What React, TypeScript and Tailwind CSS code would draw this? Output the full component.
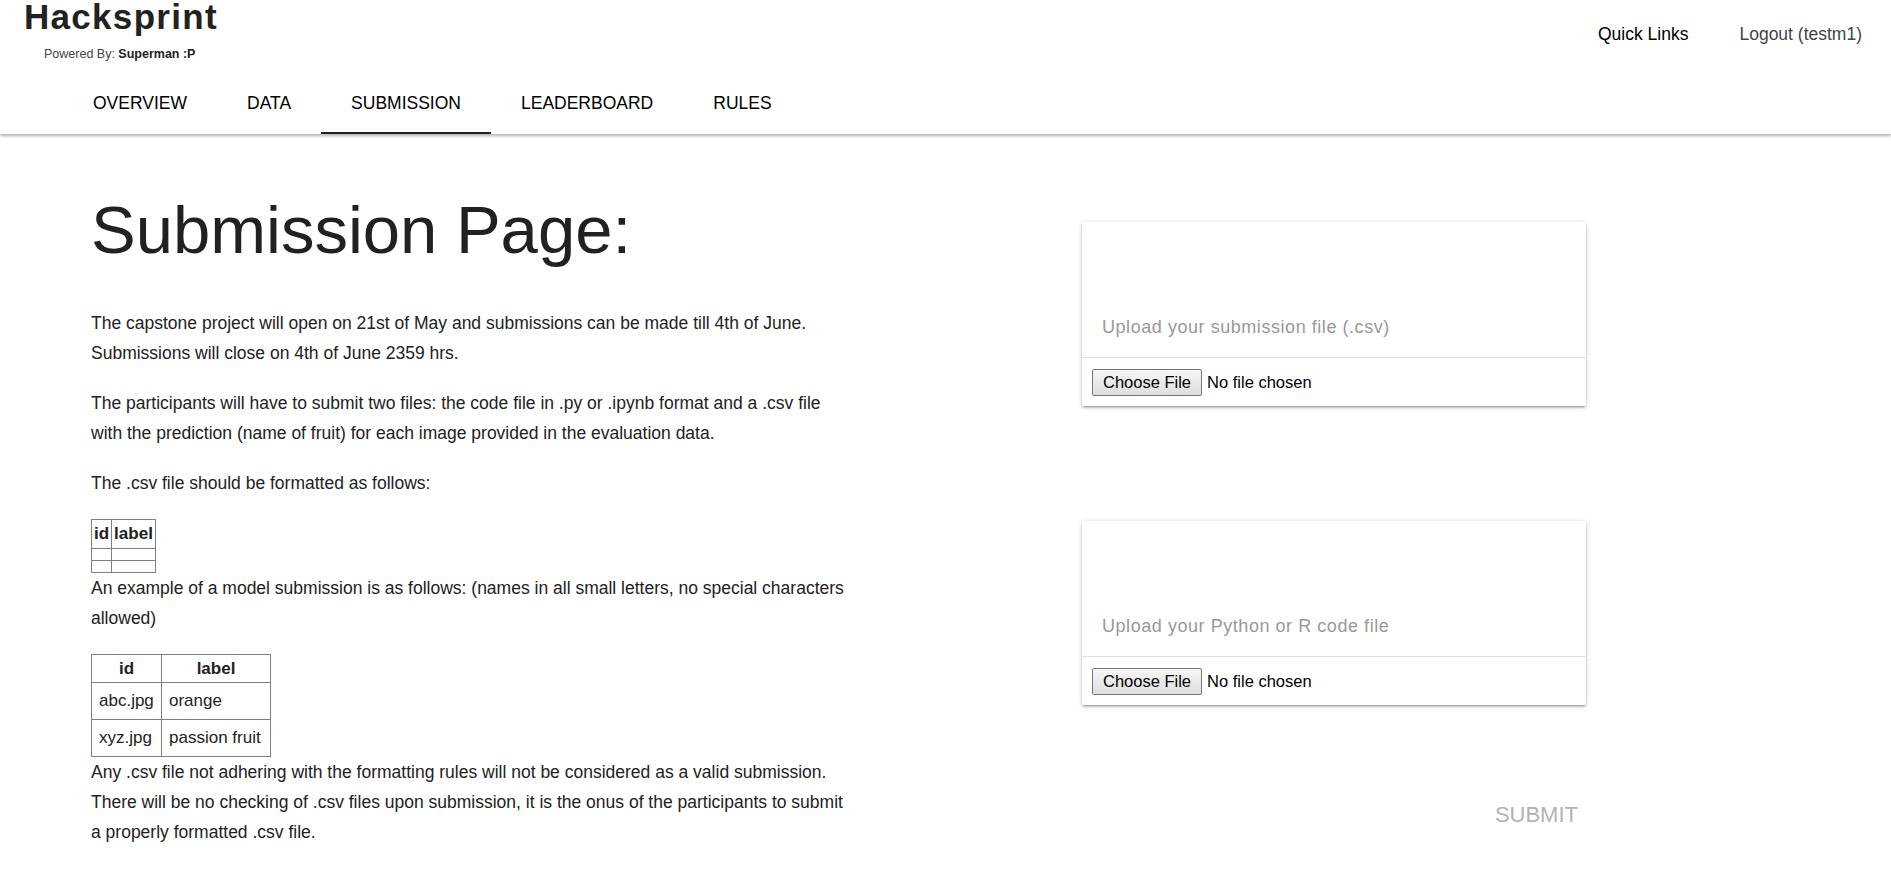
import React from 'react';

const tabs = ['OVERVIEW', 'DATA', 'SUBMISSION', 'LEADERBOARD', 'RULES'];

function UploadCard({ label }: { label: string }) {
    return (
        <div className="rounded-[2px] bg-white shadow-[0_2px_2px_0_rgba(0,0,0,0.14),0_3px_1px_-2px_rgba(0,0,0,0.12),0_1px_5px_0_rgba(0,0,0,0.2)]">
            <div className="flex h-[135px] items-end px-[20px] pb-[18px]">
                <span className="text-[18px] leading-[24px] tracking-[0.55px] text-[#999]">{label}</span>
            </div>
            <div className="flex items-center gap-[5px] border-t border-[#e0e0e0] px-[10px] pt-[11px] pb-[10px]">
                <span className="inline-flex h-[27px] items-center rounded-[2px] border border-[#767676] bg-gradient-to-b from-[#f6f6f6] to-[#dedede] px-[10px] text-[16.5px] text-black">
                    Choose File
                </span>
                <span className="text-[16.5px] text-black">No file chosen</span>
            </div>
        </div>
    );
}

export default function App() {
    return (
        <div className="min-h-screen bg-white font-['Liberation_Sans',Arial,sans-serif] text-[#222]">
            <header className="relative z-10 bg-white shadow-[0_2px_3px_rgba(0,0,0,0.3)]">
                <div className="flex h-[74px] items-start justify-between">
                    <div className="pl-[24px]">
                        <div className="text-[35px] font-bold leading-[34px] tracking-[1.3px] text-[#222]">Hacksprint</div>
                        <div className="mt-[13px] pl-[20px] text-[12.5px] leading-[14px] text-[#444]">
                            Powered By: <span className="font-bold text-[#222]">Superman :P</span>
                        </div>
                    </div>
                    <div className="flex gap-[51px] pt-[23px] pr-[29px] text-[17.5px] leading-[22px]">
                        <a className="text-black">Quick Links</a>
                        <a className="text-[#444]">Logout (testm1)</a>
                    </div>
                </div>
                <nav className="flex h-[60px] pl-[63px]">
                    {tabs.map((t) => (
                        <div
                            key={t}
                            className={`flex items-center border-b-2 px-[30px] text-[17.5px] text-black ${t === 'SUBMISSION' ? 'border-[#222]' : 'border-transparent'}`}
                        >
                            {t}
                        </div>
                    ))}
                </nav>
            </header>

            <main className="flex pt-[59px]">
                {/* Left: rules text */}
                <div className="w-[849px] shrink-0 pl-[91px] text-[17.5px] leading-[30px] text-[#222]">
                    <h1 className="mb-[41px] text-[67px] leading-[74px] font-normal text-[#212121]">Submission Page:</h1>
                    <p className="mb-[20px]">
                        The capstone project will open on 21st of May and submissions can be made till 4th of June. Submissions will close on 4th of June 2359 hrs.
                    </p>
                    <p className="mb-[20px]">
                        The participants will have to submit two files: the code file in .py or .ipynb format and a .csv file with the prediction (name of fruit) for each image provided in the evaluation data.
                    </p>
                    <p className="mb-[21px]">The .csv file should be formatted as follows:</p>
                    <table className="border-collapse border border-[#808080] text-[17px]">
                        <thead>
                            <tr>
                                <th className="h-[29px] border border-[#808080] px-[2px] font-bold leading-[24px]">id</th>
                                <th className="h-[29px] border border-[#808080] px-[2px] font-bold leading-[24px]">label</th>
                            </tr>
                        </thead>
                        <tbody>
                            <tr>
                                <td className="h-[12px] border border-[#808080] p-0"></td>
                                <td className="h-[12px] border border-[#808080] p-0"></td>
                            </tr>
                            <tr>
                                <td className="h-[12px] border border-[#808080] p-0"></td>
                                <td className="h-[12px] border border-[#808080] p-0"></td>
                            </tr>
                        </tbody>
                    </table>
                    <p className="mb-[21px]">
                        An example of a model submission is as follows: (names in all small letters, no special characters allowed)
                    </p>
                    <table className="border-collapse border border-[#808080] text-[17px]">
                        <thead>
                            <tr>
                                <th className="h-[28px] w-[70px] border border-[#808080] font-bold leading-[24px]">id</th>
                                <th className="h-[28px] w-[109px] border border-[#808080] font-bold leading-[24px]">label</th>
                            </tr>
                        </thead>
                        <tbody>
                            <tr>
                                <td className="h-[37px] border border-[#808080] px-[7px]">abc.jpg</td>
                                <td className="h-[37px] border border-[#808080] px-[7px]">orange</td>
                            </tr>
                            <tr>
                                <td className="h-[37px] border border-[#808080] px-[7px]">xyz.jpg</td>
                                <td className="h-[37px] border border-[#808080] px-[7px]">passion fruit</td>
                            </tr>
                        </tbody>
                    </table>
                    <p>
                        Any .csv file not adhering with the formatting rules will not be considered as a valid submission. There will be no checking of .csv files upon submission, it is the onus of the participants to submit a properly formatted .csv file.
                    </p>
                </div>

                {/* Right: upload cards */}
                <div className="ml-[233px] mt-[29px] w-[504px] shrink-0">
                    <UploadCard label="Upload your submission file (.csv)" />
                    <div className="mt-[115px]">
                        <UploadCard label="Upload your Python or R code file" />
                    </div>
                    <div className="mt-[92px] flex justify-end pr-[8px]">
                        <button className="text-[22px] leading-[36px] text-[#b3b3b3]">SUBMIT</button>
                    </div>
                </div>
            </main>
        </div>
    );
}
